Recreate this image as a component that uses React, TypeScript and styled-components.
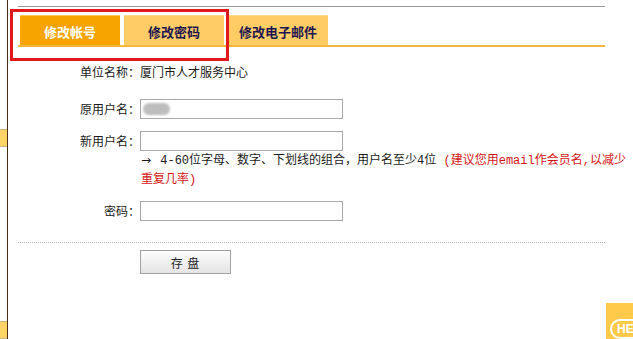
import styled, { createGlobalStyle } from 'styled-components';

const GlobalStyle = createGlobalStyle`
  html, body {
    margin: 0;
    padding: 0;
    background: #ffffff;
    overflow: hidden;
  }
  body {
    font-family: 'Noto Sans CJK SC', 'DejaVu Sans', sans-serif;
    font-size: 12px;
    color: #222222;
  }
  * {
    box-sizing: border-box;
  }
`;

const Page = styled('div')({
  position: 'relative',
  display: 'flex',
  alignItems: 'flex-start',
  width: '633px',
  height: '339px',
});

const SideRail = styled('div')({
  display: 'flex',
  flexDirection: 'column',
  width: '8px',
  height: '339px',
  borderRight: '1px solid #4a2c12',
});

const RailTab = styled('div')((props: { $top: number; $h: number }) => ({
  marginTop: `${props.$top}px`,
  height: `${props.$h}px`,
  background: '#ffd466',
  borderTop: '1px solid #c9b48a',
  borderBottom: '1px solid #c9b48a',
}));

const Panel = styled('div')({
  marginLeft: '10px',
  marginTop: '6px',
  width: '587px',
  borderTop: '1px solid #9a9a9a',
});

const Callout = styled('div')({
  position: 'absolute',
  left: '10px',
  top: '9px',
  width: '219px',
  height: '52px',
  border: '3px solid #e01a1a',
  pointerEvents: 'none',
});

const TabBar = styled('div')({
  display: 'flex',
  gap: '4px',
  padding: '8px 0 0 2px',
  borderBottom: '2px solid #f5b43c',
});

const Tab = styled('div')((props: { $active?: boolean }) => ({
  position: 'relative',
  display: 'flex',
  justifyContent: 'center',
  alignItems: 'center',
  width: '100px',
  height: '30px',
  paddingTop: '2px',
  fontSize: '13px',
  fontWeight: 700,
  color: props.$active ? '#ffffff' : '#1e1650',
  background: props.$active ? '#f7a400' : '#ffcc66',
  borderTop: props.$active ? '1px solid #fcc45c' : '1px solid #ffd98a',
  '::after': props.$active
    ? {
        content: '""',
        position: 'absolute',
        left: '50%',
        bottom: 0,
        transform: 'translateX(-50%)',
        borderLeft: '4px solid transparent',
        borderRight: '4px solid transparent',
        borderBottom: '4px solid #ffffff',
      }
    : {},
}));

const Form = styled('div')({
  display: 'flex',
  flexDirection: 'column',
  paddingTop: '15px',
});

const Row = styled('div')((props: { $top?: number }) => ({
  display: 'grid',
  gridTemplateColumns: '122px auto',
  alignItems: 'center',
  minHeight: '20px',
  marginTop: `${props.$top ?? 0}px`,
}));

const Label = styled('div')({
  textAlign: 'right',
  lineHeight: '20px',
  color: '#1a1a1a',
});

const Value = styled('div')({
  lineHeight: '20px',
  color: '#1a1a1a',
});

const Field = styled('div')({
  position: 'relative',
  width: '203px',
  height: '20px',
  border: '1px solid #a8a8a8',
  background: '#ffffff',
  input: {
    width: '100%',
    height: '100%',
    border: 'none',
    outline: 'none',
    padding: '0 3px',
    fontSize: '12px',
    background: 'transparent',
  },
});

const Blur = styled('span')({
  position: 'absolute',
  left: '2px',
  top: '3px',
  width: '27px',
  height: '12px',
  borderRadius: '7px',
  background: '#bdbdbd',
  filter: 'blur(1px)',
});

const Hint = styled('div')({
  marginLeft: '123px',
  width: '490px',
  lineHeight: '19px',
  fontFamily: "'Liberation Mono', 'Noto Sans CJK SC', monospace",
  color: '#1a1a1a',
});

const Arrow = styled('b')({
  fontFamily: "'DejaVu Sans', sans-serif",
  fontWeight: 400,
  fontSize: '12px',
  marginRight: '2px',
});

const Advice = styled('span')({
  color: '#d21414',
});

const Divider = styled('div')({
  marginTop: '21px',
  borderTop: '1px dotted #b8b8b8',
});

const SaveButton = styled('button')({
  marginTop: '7px',
  marginLeft: '122px',
  width: '91px',
  height: '24px',
  border: '1px solid #a0a0a0',
  background: 'linear-gradient(180deg, #fdfdfd 0%, #e4e4e4 100%)',
  fontFamily: "'Noto Sans CJK SC', sans-serif",
  fontSize: '12px',
  color: '#222222',
  padding: 0,
  letterSpacing: '1px',
});

const HelpBadge = styled('div')({
  position: 'absolute',
  right: 0,
  bottom: 0,
  width: '27px',
  height: '36px',
  background: '#ffc94a',
  overflow: 'hidden',
  span: {
    position: 'absolute',
    left: '4px',
    top: '16px',
    padding: '1px 5px',
    border: '2px solid #ffffff',
    borderRadius: '10px',
    color: '#ffffff',
    fontFamily: "'Liberation Sans', sans-serif",
    fontWeight: 700,
    fontSize: '12px',
    lineHeight: '14px',
    whiteSpace: 'nowrap',
  },
});

export default function App() {
  return (
    <>
      <GlobalStyle />
      <Page>
        <SideRail>
          <RailTab $top={129} $h={20} />
          <RailTab $top={174} $h={20} />
        </SideRail>
        <Panel>
          <TabBar>
            <Tab $active>修改帐号</Tab>
            <Tab>修改密码</Tab>
            <Tab>修改电子邮件</Tab>
          </TabBar>
          <Form>
            <Row>
              <Label>单位名称：</Label>
              <Value>厦门市人才服务中心</Value>
            </Row>
            <Row $top={17}>
              <Label>原用户名：</Label>
              <Field>
                <Blur />
                <input type="text" />
              </Field>
            </Row>
            <Row $top={12}>
              <Label>新用户名：</Label>
              <Field>
                <input type="text" />
              </Field>
            </Row>
            <Hint>
              <Arrow>→</Arrow> 4-60位字母、数字、下划线的组合，用户名至少4位{' '}
              <Advice>(建议您用email作会员名,以减少重复几率)</Advice>
            </Hint>
            <Row $top={11}>
              <Label>密码：</Label>
              <Field>
                <input type="password" />
              </Field>
            </Row>
            <Divider />
            <SaveButton>存 盘</SaveButton>
          </Form>
        </Panel>
        <Callout />
        <HelpBadge>
          <span>HELP</span>
        </HelpBadge>
      </Page>
    </>
  );
}
